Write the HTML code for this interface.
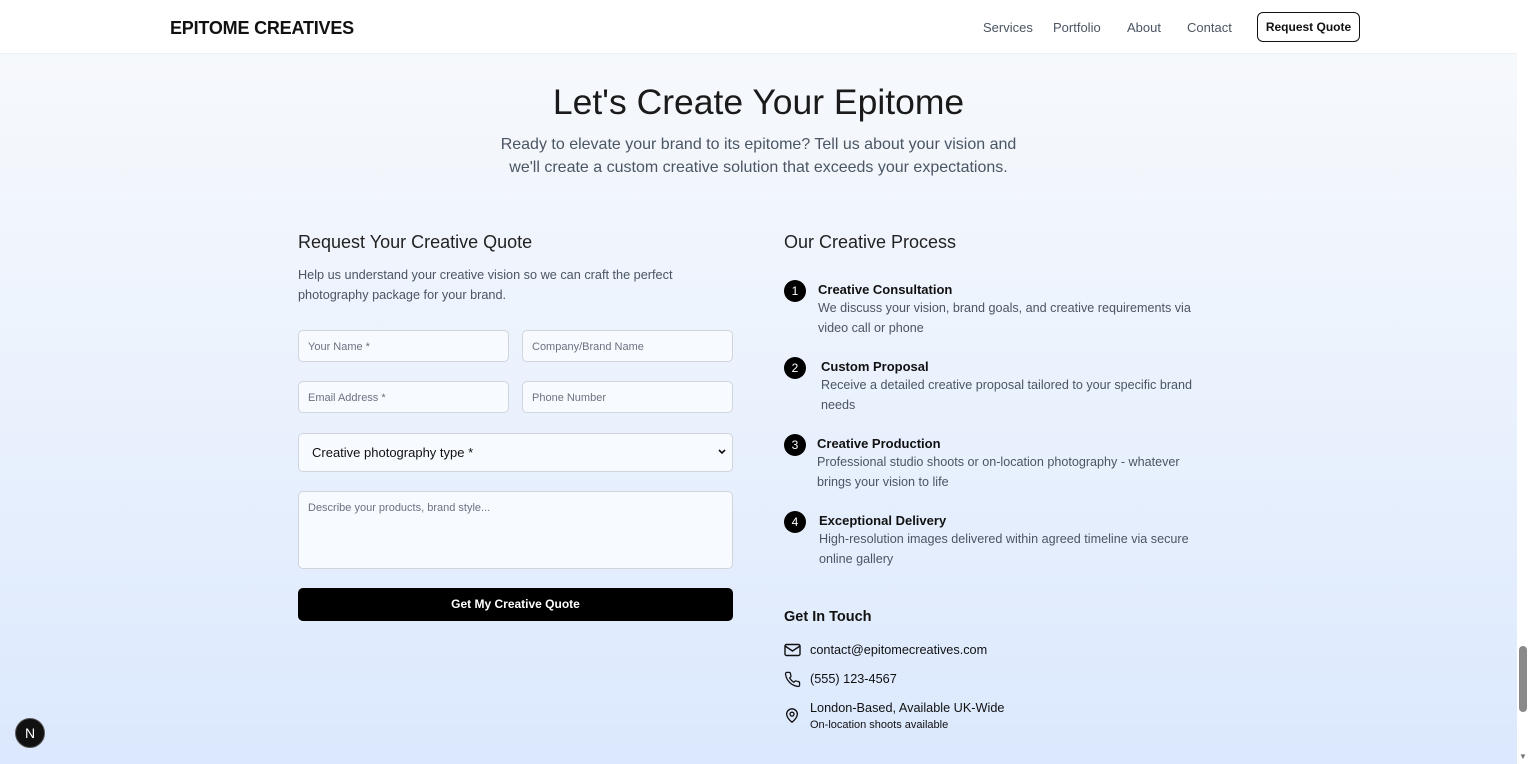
<!DOCTYPE html>
<html><head><style>
*{box-sizing:border-box;margin:0;padding:0}
body{width:1529px;height:764px;overflow:hidden;font-family:"Liberation Sans",sans-serif;position:relative;background:linear-gradient(#f8fafc 0px,#eef4fd 300px,#dbe8fd 764px);color:#111}
.nav{position:absolute;top:0;left:0;width:1517px;height:54px;background:#fff;border-bottom:1px solid #eef0f3}
.logo{position:absolute;left:170px;top:18px;font-size:18px;font-weight:bold;letter-spacing:-.2px}
.links{position:absolute;top:20px;font-size:13px;color:#4b5563}
.btn{position:absolute;left:1257px;top:12px;width:103px;height:30px;border:1px solid #111;border-radius:6px;font-size:12px;font-weight:bold;text-align:center;line-height:28px;background:#fff}
h1{position:absolute;top:82px;left:0;width:1517px;text-align:center;font-weight:normal;font-size:35.5px;color:#1a1a1a}
.sub{position:absolute;top:133px;left:0;width:1517px;text-align:center;font-size:16px;line-height:23px;color:#4b5563}
h2{position:absolute;font-weight:normal;font-size:18px;color:#222}
.p{position:absolute;font-size:13px;line-height:19.5px;color:#4b5563}
.in{position:absolute;height:32px;border:1px solid #d1d5db;border-radius:5px;background:#f7faff;font-size:11px;color:#6b7280;padding:10px 9px}
.step{position:absolute;left:784px}
.num{position:absolute;left:0;top:0;width:22px;height:22px;border-radius:50%;background:#000;color:#fff;font-size:12px;text-align:center;line-height:22px}
.st{font-size:13px;font-weight:bold;color:#111;line-height:19px}
.sd{font-size:12.6px;color:#4b5563;line-height:19.5px}
.ci{position:absolute;left:784px;font-size:13px;color:#111}
.sb{position:absolute;right:0;top:0;width:12px;height:764px;background:#fff}
</style></head><body>
<div class="nav">
<div class="logo">EPITOME CREATIVES</div>
<div class="links" style="left:983px">Services</div>
<div class="links" style="left:1053px">Portfolio</div>
<div class="links" style="left:1127px">About</div>
<div class="links" style="left:1187px">Contact</div>
<div class="btn">Request Quote</div>
</div>
<h1>Let's Create Your Epitome</h1>
<div class="sub">Ready to elevate your brand to its epitome? Tell us about your vision and<br>we'll create a custom creative solution that exceeds your expectations.</div>

<h2 style="left:298px;top:232px">Request Your Creative Quote</h2>
<div class="p" style="left:298px;top:266px;width:420px;font-size:12.7px">Help us understand your creative vision so we can craft the perfect photography package for your brand.</div>
<div class="in" style="left:298px;top:330px;width:211px">Your Name *</div>
<div class="in" style="left:522px;top:330px;width:211px">Company/Brand Name</div>
<div class="in" style="left:298px;top:381px;width:211px">Email Address *</div>
<div class="in" style="left:522px;top:381px;width:211px">Phone Number</div>
<div class="in" style="left:298px;top:433px;width:435px;height:39px;font-size:13px;color:#111;padding:11px 13px">Creative photography type *<svg style="position:absolute;right:6px;top:15px" width="8" height="6" viewBox="0 0 8 6"><path d="M1 1l3 3 3-3" fill="none" stroke="#111" stroke-width="1.6"/></svg></div>
<div class="in" style="left:298px;top:491px;width:435px;height:78px">Describe your products, brand style...</div>
<div style="position:absolute;left:298px;top:588px;width:435px;height:33px;background:#000;border-radius:5px;color:#fff;font-size:12px;font-weight:bold;text-align:center;line-height:33px">Get My Creative Quote</div>

<h2 style="left:784px;top:232px">Our Creative Process</h2>
<div class="step" style="top:280px"><div class="num">1</div><div style="margin-left:34px"><div class="st">Creative Consultation</div><div class="sd">We discuss your vision, brand goals, and creative requirements via<br>video call or phone</div></div></div>
<div class="step" style="top:357px"><div class="num">2</div><div style="margin-left:37px"><div class="st">Custom Proposal</div><div class="sd">Receive a detailed creative proposal tailored to your specific brand<br>needs</div></div></div>
<div class="step" style="top:434px"><div class="num">3</div><div style="margin-left:33px"><div class="st">Creative Production</div><div class="sd">Professional studio shoots or on-location photography - whatever<br>brings your vision to life</div></div></div>
<div class="step" style="top:511px"><div class="num">4</div><div style="margin-left:35px"><div class="st">Exceptional Delivery</div><div class="sd">High-resolution images delivered within agreed timeline via secure<br>online gallery</div></div></div>

<div style="position:absolute;left:784px;top:609px;font-size:14.5px;font-weight:bold">Get In Touch</div>
<svg style="position:absolute;left:784px;top:643px" width="17" height="14" viewBox="0 0 17 14" fill="none" stroke="#111" stroke-width="1.4"><rect x="1" y="1.5" width="15" height="11" rx="1.5"/><path d="M1 3l7.5 5L16 3"/></svg>
<div class="ci" style="left:810px;top:643px;font-size:12.7px">contact@epitomecreatives.com</div>
<svg style="position:absolute;left:784px;top:671px" width="17" height="17" viewBox="0 0 24 24" fill="none" stroke="#111" stroke-width="1.8"><path d="M22 16.9v3a2 2 0 0 1-2.2 2 19.8 19.8 0 0 1-8.6-3.1 19.5 19.5 0 0 1-6-6A19.8 19.8 0 0 1 2.1 4.2 2 2 0 0 1 4.1 2h3a2 2 0 0 1 2 1.7c.1 1 .4 1.9.7 2.8a2 2 0 0 1-.5 2.1L8 9.9a16 16 0 0 0 6 6l1.3-1.300a2 2 0 0 1 2.1-.4c.9.3 1.8.6 2.8.7a2 2 0 0 1 1.7 2z"/></svg>
<div class="ci" style="left:810px;top:672px;font-size:12.7px">(555) 123-4567</div>
<svg style="position:absolute;left:784px;top:707px" width="16" height="17" viewBox="0 0 24 24" fill="none" stroke="#111" stroke-width="2"><path d="M20 10c0 6-8 12-8 12s-8-6-8-12a8 8 0 0 1 16 0z"/><circle cx="12" cy="10" r="3"/></svg>
<div class="ci" style="left:810px;top:701px;font-size:12.7px">London-Based, Available UK-Wide</div>
<div class="ci" style="left:810px;top:719px;font-size:11px">On-location shoots available</div>

<div style="position:absolute;left:15px;top:718px;width:30px;height:30px;border-radius:50%;background:#111;border:1px solid #555;color:#fff;font-size:14px;text-align:center;line-height:28px">N</div>
<div class="sb"><div style="position:absolute;left:2px;top:646px;width:8px;height:66px;border-radius:4px;background:#8a8a8a"></div><div style="position:absolute;left:2px;top:752px;font-size:8px;color:#777">&#9660;</div></div>
</body></html>
